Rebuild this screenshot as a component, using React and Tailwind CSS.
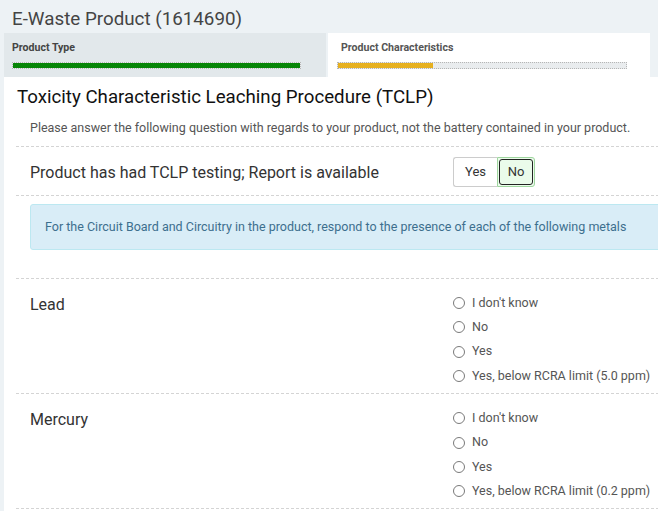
import React from 'react';

const metals = [
  { name: 'Lead', limit: '5.0 ppm' },
  { name: 'Mercury', limit: '0.2 ppm' },
];

function Radio({ label }) {
  return (
    <label className="flex items-center gap-[7px] h-[24.3px] text-[12.5px] text-[#555]">
      <span className="w-[12px] h-[12px] rounded-full border border-[#7a7a7a] bg-white shrink-0" />
      <span>{label}</span>
    </label>
  );
}

function Bar({ pct, fill }) {
  return (
    <div className="h-[7px] border border-dotted border-[#b5b5b5] bg-[#e9ecee]">
      <div className={`h-full ${fill}`} style={{ width: `${pct}%` }} />
    </div>
  );
}

export default function App() {
  return (
    <div className="w-[658px] h-[511px] overflow-hidden bg-[#edf2f5] font-['Roboto',sans-serif]">
      {/* Page header */}
      <h1 className="h-[33px] px-3 pt-[6px] text-[18.8px] leading-[26px] text-[#444]">
        E-Waste Product (1614690)
      </h1>

      {/* Step tabs */}
      <div className="flex pl-1 h-[44px]">
        <div className="w-[322px] bg-[#e2e8eb] pl-2 pr-[25px] pt-[9px]">
          <p className="text-[10.6px] leading-[12px] font-bold text-[#444]">Product Type</p>
          <div className="mt-[8px]">
            <Bar pct={100} fill="bg-[#078507]" />
          </div>
        </div>
        <div className="w-[322px] ml-[2px] bg-white pl-[9px] pr-[23px] pt-[9px]">
          <p className="pl-[4px] text-[10.6px] leading-[12px] font-bold text-[#555]">Product Characteristics</p>
          <div className="mt-[8px]">
            <Bar pct={33} fill="bg-[#e6b020]" />
          </div>
        </div>
      </div>

      {/* Content panel */}
      <div className="ml-1 w-[700px] bg-white pb-10">
        <h2 className="pl-[13px] pt-[6px] text-[18.7px] leading-[28px] text-[#111]">
          Toxicity Characteristic Leaching Procedure (TCLP)
        </h2>

        <div className="ml-3">
          <p className="pl-[14px] mt-[7px] pb-[8px] text-[12.5px] leading-[20px] text-[#555]">
            Please answer the following question with regards to your product, not the battery contained in your product.
          </p>

          {/* TCLP question */}
          <div className="border-t border-dashed border-[#d4d4d4] h-[49px] pl-[14px] pt-[2px] flex items-center">
            <span className="w-[423px] mt-[1px] text-[16px] text-[#333]">
              Product has had TCLP testing; Report is available
            </span>
            <div className="flex h-[30px] text-[13px] text-[#333]">
              <button type="button" className="w-[44px] border border-[#ccc] border-r-0 rounded-l-[3px] bg-white">
                Yes
              </button>
              <button type="button" className="w-[38px] rounded-r-[3px] border border-[#9fd69f] p-[1px] bg-[#eafbea]">
                <span className="flex items-center justify-center h-full rounded-[3px] border border-[#222]">No</span>
              </button>
            </div>
          </div>

          {/* Info alert */}
          <div className="border-t border-dashed border-[#d4d4d4] pt-[8px] pb-[28px] pl-[14px]">
            <div className="h-[46px] flex items-center pl-[14px] bg-[#d9edf7] border border-[#bce8f1] rounded-[3px] text-[12.5px] text-[#3d6f8e]">
              For the Circuit Board and Circuitry in the product, respond to the presence of each of the following metals
            </div>
          </div>

          {/* Metal questions */}
          {metals.map((m) => (
            <div key={m.name} className="border-t border-dashed border-[#d4d4d4] flex pl-[14px] pt-[12px] pb-[5px]">
              <span className="w-[423px] mt-[4px] text-[16px] leading-[20px] text-[#333]">{m.name}</span>
              <div className="flex flex-col">
                <Radio label="I don't know" />
                <Radio label="No" />
                <Radio label="Yes" />
                <Radio label={`Yes, below RCRA limit (${m.limit})`} />
              </div>
            </div>
          ))}
          <div className="border-t border-dashed border-[#d4d4d4]" />
        </div>
      </div>
    </div>
  );
}
